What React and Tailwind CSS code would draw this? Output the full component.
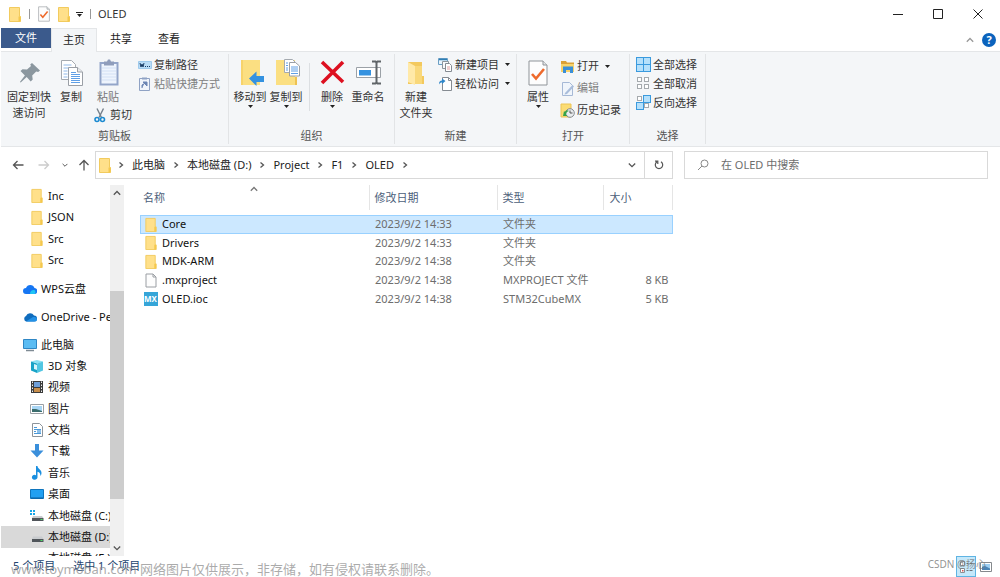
import React, { useState } from 'react';

const FolderIcon = ({ className = 'w-3 h-4' }) => (
  <svg viewBox="0 0 12 16" className={`shrink-0 ${className}`}>
    <path d="M.5 1.500h10v9h1v5H.5z" fill="#ffe08a" stroke="#f2cb5e" />
    <path d="M9.500 10.500h2v5h-2z" fill="#f5c84c" />
  </svg>
);

const CheckDocIcon = ({ className }) => (
  <svg viewBox="0 0 20 26" className={`shrink-0 ${className}`}>
    <path d="M1 1h14l4 4v20H1z" fill="#fdfdfd" stroke="#8f9499" strokeWidth="1" />
    <path d="M15 1v4h4" fill="#e4e6e8" stroke="#8f9499" strokeWidth="1" />
    <path d="M4 14l4 4.500 8-9.500" fill="none" stroke="#ee6a2c" strokeWidth="2.600" />
  </svg>
);

const Caret = ({ className = '' }) => (
  <svg viewBox="0 0 5 3" className={`w-[5px] h-[3px] shrink-0 ${className}`}>
    <path d="M0 0h5L2.500 3z" fill="#222" />
  </svg>
);

const Chevron = ({ dir = 'right', className = 'w-2 h-2', color = '#555' }) => {
  const paths = {
    right: 'M2.500 1.500L5.500 4l-3 2.500',
    down: 'M.8 2.500L4 5.700l3.200-3.200',
    up: 'M.8 5.700L4 2.500l3.200 3.200',
  };
  return (
    <svg viewBox="0 0 8 8" className={`shrink-0 ${className}`}>
      <path d={paths[dir]} fill="none" stroke={color} strokeWidth="1.300" />
    </svg>
  );
};

const PinIcon = () => (
  <svg viewBox="0 0 32 32" className="w-8 h-8">
    <path d="M19 6l8 7.500-1.800 1.500-2-.5-4 4 .5 4-2 2-4-4.500-6 5.500-.8-.6 5-6.400L7.500 14l2-1.800 4.500.3 4-3.500-.8-1.500z" fill="#8b979f" />
  </svg>
);

const CopyIcon = () => (
  <svg viewBox="0 0 32 32" className="w-8 h-8">
    <path d="M6.500 3.500h10l4 4v15h-14z" fill="#fff" stroke="#a5aab0" />
    <path d="M8.500 8h8M8.500 11h6M8.500 14h4M8.500 17h4M8.500 20h4" stroke="#8fb8e8" />
    <path d="M13.500 10.500h9l5 4.500v13.500h-14z" fill="#fff" stroke="#9a9fa6" />
    <path d="M22.500 10.500v4.500h5" fill="#e9ecef" stroke="#9a9fa6" />
    <path d="M16 15.500h5M16 17.500h9M16 19.500h9M16 21.500h9M16 23.500h9M16 25.500h9" stroke="#5f9fe6" />
  </svg>
);

const PasteIcon = () => (
  <svg viewBox="0 0 32 32" className="w-8 h-8">
    <path d="M8.500 6h17v21.500h-17z" fill="#eef4fd" stroke="#93a5c9" strokeWidth="2" />
    <path d="M12 4.500h3l1-2h2l1 2h3v4H12z" fill="#8f9dbb" />
    <path d="M10 11h14M10 14h14M10 17h14M10 20h14M10 23h14" stroke="#d3e0f4" />
  </svg>
);

const CutIcon = () => (
  <svg viewBox="0 0 12 15" className="w-3 h-[15px] shrink-0">
    <path d="M3 .5l4.500 9M9.500.5l-4.500 9" stroke="#75808a" strokeWidth="1.400" fill="none" />
    <circle cx="3" cy="11.500" r="2" fill="none" stroke="#1d8bd1" strokeWidth="1.600" />
    <circle cx="8.500" cy="11.500" r="2" fill="none" stroke="#1d8bd1" strokeWidth="1.600" />
  </svg>
);

const PathIcon = () => (
  <svg viewBox="0 0 14 14" className="w-3.5 h-3.5 shrink-0">
    <path d="M.5 3.500h13v7H.5z" fill="#b9dcf6" stroke="#9fcaec" />
    <path d="M2 5l1 4 1-3 1 3 1-4M7 8.500h1M9 8.500h1M11 8.500h1" stroke="#1b3d66" fill="none" />
  </svg>
);

const ShortcutIcon = () => (
  <svg viewBox="0 0 14 14" className="w-3.5 h-3.5 shrink-0">
    <path d="M1.500 1.500h10v12h-10z" fill="#f1f5fb" stroke="#8fa2c4" />
    <path d="M4 .5h5v2H4z" fill="#8fa2c4" />
    <path d="M4 11V8l2.500-1.500M5 5h4v4z" stroke="#6d86b4" fill="#6d86b4" />
  </svg>
);

const MoveToIcon = () => (
  <svg viewBox="0 0 32 32" className="w-8 h-8">
    <path d="M7 3h19v25H7z" fill="#fbdf82" />
    <path d="M7 3h2v25H7z" fill="#f7d36b" />
    <path d="M15 21.500l7.500-7v4.500H30v6h-7.500v4z" fill="#3492e0" />
  </svg>
);

const CopyToIcon = () => (
  <svg viewBox="0 0 32 32" className="w-8 h-8">
    <path d="M6 3h19v25H6z" fill="#fbdf82" />
    <path d="M25 20h2v8h-2z" fill="#eec252" />
    <path d="M14.500 2.500h8l3 3v10h-11z" fill="#fff" stroke="#a5aab0" />
    <path d="M19.500 5.500h6l4 3.500v10h-10z" fill="#fff" stroke="#9a9fa6" />
    <path d="M21 10h7M21 12h7M21 14h7M21 16.500h7M16 6h2M16 8.500h2M16 11h2M16 13h2" stroke="#5f9fe6" />
  </svg>
);

const DeleteIcon = () => (
  <svg viewBox="0 0 32 32" className="w-8 h-8">
    <path d="M6 5l21 20M27 5L6 26" stroke="#dd1020" strokeWidth="3.600" fill="none" />
  </svg>
);

const RenameIcon = () => (
  <svg viewBox="0 0 32 32" className="w-8 h-8">
    <path d="M4.500 10.500h24v10h-24z" fill="#fff" stroke="#9ba1a7" />
    <path d="M7 13h12v5.500H7z" fill="#3492e0" />
    <path d="M24.500 5v21M20 4.500h3.500l1 1 1-1H29M20 26.500h3.500l1-1 1 1H29" stroke="#5f6468" strokeWidth="2" fill="none" />
  </svg>
);

const NewFolderIcon = () => (
  <svg viewBox="0 0 32 32" className="w-8 h-8">
    <path d="M8 5h14v14h2v8H8z" fill="#f3c95e" />
    <path d="M8 5l7 4v19l-7-3z" fill="#ffe9a8" />
    <path d="M15 9h7v18h-7z" fill="#f9d87a" />
  </svg>
);

const NewItemIcon = () => (
  <svg viewBox="0 0 15 15" className="w-[15px] h-[15px] shrink-0">
    <path d="M.5 1.500h9v6h-9z" fill="#e7f3fc" stroke="#6b9fc4" />
    <path d="M1 2.500h8" stroke="#2f7fb5" strokeWidth="1.500" />
    <path d="M4.500 4.500h6v7h-6z" fill="#f7f9fb" stroke="#8d949b" />
    <path d="M7.500 6.500h4l2 2v6h-6z" fill="#fff" stroke="#858b92" />
    <path d="M9 10h3M9 12h3" stroke="#e3a0a0" />
  </svg>
);

const EasyAccessIcon = () => (
  <svg viewBox="0 0 15 15" className="w-[15px] h-[15px] shrink-0">
    <path d="M4.500 1.500h6l3 3v10h-9z" fill="#fff" stroke="#858b92" />
    <path d="M10.500 1.500v3h3" fill="none" stroke="#858b92" />
    <path d="M1 8.500c0-3 1-4 3-4V2.500L7.500 5 4 8V6.500C2.500 6.500 2 7 1 8.500z" fill="#2f86c9" />
  </svg>
);

const OpenIcon = () => (
  <svg viewBox="0 0 15 15" className="w-[15px] h-[15px] shrink-0">
    <path d="M1 2h5l1 1.500h7V9H1z" fill="#dba035" />
    <path d="M1 5h13v8H1z" fill="#f8d36a" />
    <path d="M3 7.500h10V14h-3v-3H6v3H3z" fill="#3a8fd8" />
  </svg>
);

const EditIcon = () => (
  <svg viewBox="0 0 15 15" className="w-[15px] h-[15px] shrink-0">
    <path d="M2.500 1.500h7l3 3v10h-10z" fill="#f0f5fb" stroke="#a6b9d6" />
    <path d="M5 12l7.500-8 1.500 1.500-7 7.500-2.500.5z" fill="#a9bddb" />
  </svg>
);

const HistoryIcon = () => (
  <svg viewBox="0 0 15 15" className="w-[15px] h-[15px] shrink-0">
    <path d="M1 1h10v13H1z" fill="#fbdc74" stroke="#ecc454" />
    <circle cx="10" cy="10" r="4.300" fill="#e9ecee" stroke="#858b91" />
    <path d="M10 7.500V10h2.500" stroke="#555" fill="none" />
    <path d="M4 8l-1 5 4.500 0-1.500-1.300c0-2 1-3.200 3-3.700C7 6.500 5.500 7.500 5 9z" fill="#35a34a" />
  </svg>
);

const SelectIcon = ({ cells }) => (
  <svg viewBox="0 0 15 15" className="w-[15px] h-[15px] shrink-0">
    {cells.map((on, i) => {
      const x = i % 2 ? 7.5 : 0.5;
      const y = i > 1 ? 7.5 : 0.5;
      return on ? (
        <rect key={i} x={x} y={y} width="7" height="7" fill="#b5e0fb" stroke="#3a9ade" />
      ) : (
        <rect key={i} x={x + 1} y={y + 1} width="4" height="4" fill="#fff" stroke="#a5aaae" />
      );
    })}
  </svg>
);

const BigButton = ({ icon, label, width, caret, disabled }) => (
  <button
    className={`flex flex-col items-center pt-0.5 leading-4 ${width} ${disabled ? 'text-[#777]' : ''}`}
  >
    {icon}
    <span className="whitespace-pre text-center">{label}</span>
    {caret && <Caret />}
  </button>
);

const SmallButton = ({ icon, label, caret, disabled, height = 'h-[19px]' }) => (
  <button className={`flex items-center gap-0.5 whitespace-nowrap ${height} ${disabled ? 'text-[#808080]' : ''}`}>
    {icon}
    <span>{label}</span>
    {caret && <Caret className="ml-1" />}
  </button>
);

const RibbonGroup = ({ caption, className, children }) => (
  <section className="flex flex-col border-r border-[#e2e4e6] shrink-0">
    <div className={`flex flex-1 items-start pt-px ${className}`}>{children}</div>
    <div className="text-center leading-4 text-[#555]">{caption}</div>
  </section>
);

const Ribbon = () => (
  <div className="flex h-24 border-y border-[#e4e6e8] bg-[#f4f6f8] pt-0.5 pb-0.5 shrink-0 overflow-hidden">
    <RibbonGroup caption="剪贴板" className="pl-1.5 pr-2">
      <BigButton icon={<PinIcon />} label={'固定到快\n速访问'} width="w-11" />
      <div className="w-[7px]" />
      <BigButton icon={<CopyIcon />} label="复制" width="w-[26px]" />
      <div className="flex w-12 flex-col items-center gap-0.5">
        <BigButton icon={<PasteIcon />} label="粘贴" width="w-8" disabled />
        <button className="flex items-center gap-1 self-end leading-4">
          <CutIcon />
          剪切
        </button>
      </div>
      <div className="ml-1.5 flex flex-col">
        <SmallButton icon={<PathIcon />} label="复制路径" />
        <SmallButton icon={<ShortcutIcon />} label="粘贴快捷方式" disabled />
      </div>
    </RibbonGroup>
    <RibbonGroup caption="组织" className="pl-[3px] pr-2">
      <BigButton icon={<MoveToIcon />} label="移动到" width="w-9" caret />
      <BigButton icon={<CopyToIcon />} label="复制到" width="w-9" caret />
      <div className="ml-[5px] mr-1 mt-2 h-12 border-r border-[#dcdfe2]" />
      <BigButton icon={<DeleteIcon />} label="删除" width="w-9" caret />
      <BigButton icon={<RenameIcon />} label="重命名" width="w-9" />
    </RibbonGroup>
    <RibbonGroup caption="新建" className="pl-[3px] pr-1.5">
      <BigButton icon={<NewFolderIcon />} label={'新建\n文件夹'} width="w-9" />
      <div className="ml-1 flex flex-col">
        <SmallButton icon={<NewItemIcon />} label="新建项目" caret />
        <SmallButton icon={<EasyAccessIcon />} label="轻松访问" caret />
      </div>
    </RibbonGroup>
    <RibbonGroup caption="打开" className="pl-[3px] pr-2">
      <BigButton
        icon={<span className="flex h-8 items-center"><CheckDocIcon className="w-5 h-[26px]" /></span>}
        label="属性"
        width="w-9"
        caret
      />
      <div className="ml-1 flex flex-col">
        <SmallButton icon={<OpenIcon />} label="打开" caret height="h-[22px]" />
        <SmallButton icon={<EditIcon />} label="编辑" disabled height="h-[22px]" />
        <SmallButton icon={<HistoryIcon />} label="历史记录" height="h-[22px]" />
      </div>
    </RibbonGroup>
    <RibbonGroup caption="选择" className="pl-1.5 pr-2">
      <div className="flex flex-col">
        <SmallButton icon={<SelectIcon cells={[1, 1, 1, 1]} />} label="全部选择" />
        <SmallButton icon={<SelectIcon cells={[0, 0, 0, 0]} />} label="全部取消" />
        <SmallButton icon={<SelectIcon cells={[0, 1, 1, 0]} />} label="反向选择" />
      </div>
    </RibbonGroup>
  </div>
);

const TitleBar = () => (
  <header className="flex h-7 items-center shrink-0">
    <FolderIcon className="ml-2 w-3 h-4" />
    <div className="mx-2 h-2.5 w-px bg-[#999]" />
    <CheckDocIcon className="w-3 h-4" />
    <FolderIcon className="ml-2 w-3 h-4" />
    <button aria-label="自定义快速访问工具栏" className="ml-1.5 flex flex-col items-center gap-px">
      <span className="h-px w-[7px] bg-[#222]" />
      <Caret />
    </button>
    <div className="mx-[7px] h-2.5 w-px bg-[#999]" />
    <h1>OLED</h1>
    <div className="ml-auto flex pr-0.5">
      <button aria-label="最小化" className="flex h-7 w-10 items-center justify-center">
        <svg viewBox="0 0 10 10" className="w-2.5 h-2.5"><path d="M0 5.500h10" stroke="#222" /></svg>
      </button>
      <button aria-label="最大化" className="flex h-7 w-10 items-center justify-center">
        <svg viewBox="0 0 10 10" className="w-2.5 h-2.5"><path d="M.5.500h9v9h-9z" stroke="#222" fill="none" /></svg>
      </button>
      <button aria-label="关闭" className="flex h-7 w-10 items-center justify-center">
        <svg viewBox="0 0 10 10" className="w-2.5 h-2.5"><path d="M.5.500l9 9M9.500.500l-9 9" stroke="#222" /></svg>
      </button>
    </div>
  </header>
);

const TabBar = () => (
  <div className="flex h-[23px] shrink-0">
    <button className="h-5 w-[50px] bg-[#3b5a8c] text-white">文件</button>
    <button className="-mb-px w-[46px] border border-b-0 border-[#e4e6e8] bg-[#f4f6f8] pb-0.5 text-[#222] z-10">主页</button>
    <button className="w-12 pb-0.5 text-[#222]">共享</button>
    <button className="w-12 pb-0.5 text-[#222]">查看</button>
    <div className="ml-auto flex items-center gap-2 pr-1">
      <button aria-label="最小化功能区" className="flex"><Chevron dir="up" color="#999" /></button>
      <button aria-label="帮助" className="flex h-3.5 w-3.5 items-center justify-center rounded-full bg-[#0b63bd] font-bold text-white">?</button>
    </div>
  </div>
);

const crumbs = ['此电脑', '本地磁盘 (D:)', 'Project', 'F1', 'OLED'];

const AddressBar = () => (
  <div className="flex h-9 items-center pl-[11px] pr-3 shrink-0">
    <div className="flex w-[83px] items-center gap-3.5">
      <button aria-label="返回" className="flex">
        <svg viewBox="0 0 12 12" className="w-3 h-3"><path d="M11.500 6H1.500M5.500 2L1.500 6l4 4" fill="none" stroke="#555" strokeWidth="1.300" /></svg>
      </button>
      <button aria-label="前进" className="flex">
        <svg viewBox="0 0 12 12" className="w-3 h-3"><path d="M.5 6h10M6.500 2l4 4-4 4" fill="none" stroke="#ccc" strokeWidth="1.300" /></svg>
      </button>
      <button aria-label="最近浏览的位置" className="-ml-0.5 flex"><Chevron dir="down" className="w-1.5 h-1.5" /></button>
      <button aria-label="向上" className="-ml-1 flex">
        <svg viewBox="0 0 12 12" className="w-3 h-3"><path d="M6 11.500V1.500M1.500 6L6 1.500 10.500 6" fill="none" stroke="#555" strokeWidth="1.300" /></svg>
      </button>
    </div>
    <div className="flex h-7 flex-1 items-center border border-[#d9d9d9]">
      <FolderIcon className="ml-[3px] w-3 h-4" />
      <nav className="ml-1.5 flex items-center">
        <Chevron />
        {crumbs.map((crumb) => (
          <React.Fragment key={crumb}>
            <a href="#" className="mx-[7px] text-[#222]">{crumb}</a>
            <Chevron />
          </React.Fragment>
        ))}
      </nav>
      <button aria-label="以前的位置" className="ml-auto mr-2 flex"><Chevron dir="down" /></button>
      <button aria-label="刷新" className="flex h-full w-7 items-center justify-center border-l border-[#d9d9d9]">
        <svg viewBox="0 0 10 10" className="w-2.5 h-2.5">
          <path d="M7 1.800A3.700 3.700 0 1 1 3 1.800M1 1.200h2.800V4" fill="none" stroke="#555" strokeWidth="1.200" />
        </svg>
      </button>
    </div>
    <label className="ml-[11px] flex h-7 w-[304px] items-center border border-[#d9d9d9] pl-3">
      <svg viewBox="0 0 12 12" className="w-3 h-3">
        <circle cx="7.500" cy="4.500" r="3.500" fill="none" stroke="#888" />
        <path d="M5 7L1 11" stroke="#888" />
      </svg>
      <input
        type="search"
        aria-label="搜索"
        placeholder="在 OLED 中搜索"
        className="ml-3 flex-1 outline-none placeholder:text-[#6d6d6d]"
      />
    </label>
  </div>
);

/* navigation pane icons */
const treeIcons = {
  wps: (
    <>
      <path d="M3 12a3 3 0 0 1 0-6 4.500 4.500 0 0 1 8.500 0A3 3 0 0 1 11 12z" fill="#1676f3" />
      <path d="M7 12c0-3 2-4.500 4.500-4a2.500 2.500 0 0 1 0 4z" fill="#20c4f4" />
    </>
  ),
  onedrive: (
    <>
      <path d="M3 11.500a3 3 0 0 1 0-5.500 4.500 4.500 0 0 1 8-.5 3 3 0 0 1 0 6z" fill="#0f6cbd" />
      <path d="M3 11.500l7-4.500c3-.5 4 1 4 2.500s-1 2-2.500 2z" fill="#2391e6" />
    </>
  ),
  pc: (
    <>
      <path d="M.5 1.500h13v9H.5z" fill="#5bbcf3" stroke="#2f86c4" />
      <path d="M3 12.500h8" stroke="#7f8b94" strokeWidth="1.500" />
    </>
  ),
  cube: (
    <>
      <path d="M1 2.500L7 1l6 1.500-5 2z" fill="#8be0f2" />
      <path d="M1 2.500l6 2V14l-6-2.500z" fill="#18a3c7" />
      <path d="M13 2.500l-6 2V14l6-2.500z" fill="#52c6e2" />
      <path d="M4 5l3 1v5l-3-1z" fill="#d9f5fb" />
    </>
  ),
  video: (
    <>
      <path d="M1 1h12v12H1z" fill="#3b3b3b" />
      <path d="M4 2h6v5H4z" fill="#6f9fd8" />
      <path d="M4 8h6v4H4z" fill="#c78e4b" />
      <path d="M2.500 1.500v12M11.500 1.500v12" stroke="#eee" strokeDasharray="1.500 1.500" />
    </>
  ),
  picture: (
    <>
      <path d="M.5 2.500h13v9H.5z" fill="#fff" stroke="#9aa0a5" />
      <path d="M2 4h10v6H2z" fill="#a9d6f5" />
      <path d="M2 7l4 0 6 2v1H2z" fill="#3a6d6d" />
    </>
  ),
  doc: (
    <>
      <path d="M2.500.500h7l3 3v10h-10z" fill="#fff" stroke="#8d949b" />
      <path d="M4 4.500h3M4 6.500h7M4 8.500h2M4 10.500h7" stroke="#4a98d8" />
      <path d="M7 7h4v3H7z" fill="#8cc0ea" />
    </>
  ),
  download: <path d="M5 0h4v6.500h4.500L7 13.500.5 6.500H5z" fill="#3a8fdb" />,
  music: (
    <path d="M6 0h1.500c0 3 4 3.500 4 7 0 1.500-.7 2.500-1.300 3 .4-2-.2-3.500-2.700-4.300v5.500A2.800 2.400 0 1 1 6 9.200z" fill="#1a8fe0" />
  ),
  desktop: (
    <>
      <path d="M.5 2.500h13v9H.5z" fill="#22a0f2" stroke="#0f75bd" />
      <path d="M1 11h12" stroke="#0d5d9c" />
    </>
  ),
  windisk: (
    <>
      <path d="M0 1h2v2H0zM3 1h2v2H3zM0 4h2v2H0zM3 4h2v2H3z" fill="#17a6e8" />
      <path d="M3 7h9l1.500 2H2z" fill="#c9cccf" />
      <path d="M2 9h11.500v3H2z" fill="#50555a" />
      <path d="M10.500 10.500h2" stroke="#4fdf6a" />
    </>
  ),
  disk: (
    <>
      <path d="M3 6.500h9L13.500 9H2z" fill="#c9cccf" />
      <path d="M2 9h11.500v3H2z" fill="#50555a" />
      <path d="M10.500 10.500h2" stroke="#4fdf6a" />
    </>
  ),
};

const TreeRow = ({ icon, label, root, selected }) => (
  <a
    href="#"
    className={`flex items-center gap-1 whitespace-nowrap ${root ? 'pl-[21px]' : 'pl-7'} ${selected ? 'bg-[#d9d9d9]' : ''}`}
  >
    <span className="flex w-[15px] shrink-0 justify-center">
      {icon === 'folder' ? (
        <FolderIcon className="w-3 h-[15px]" />
      ) : (
        <svg viewBox="0 0 14 14" className="w-3.5 h-3.5">{treeIcons[icon]}</svg>
      )}
    </span>
    {label}
  </a>
);

const folders = ['Inc', 'JSON', 'Src', 'Src'];

const thisPc = [
  { icon: 'cube', label: '3D 对象' },
  { icon: 'video', label: '视频' },
  { icon: 'picture', label: '图片' },
  { icon: 'doc', label: '文档' },
  { icon: 'download', label: '下载' },
  { icon: 'music', label: '音乐' },
  { icon: 'desktop', label: '桌面' },
  { icon: 'windisk', label: '本地磁盘 (C:)' },
  { icon: 'disk', label: '本地磁盘 (D:)', selected: true },
  { icon: 'disk', label: '本地磁盘 (E:)' },
];

const Sidebar = () => (
  <aside className="flex w-[123px] shrink-0">
    <nav className="flex min-w-0 flex-1 flex-col gap-[7px] overflow-hidden pt-0.5 text-[#111]">
      <div className="grid h-[86px] shrink-0 auto-rows-fr">
        {folders.map((name, i) => (
          <TreeRow key={i} icon="folder" label={name} />
        ))}
      </div>
      <div className="grid h-[21px] shrink-0"><TreeRow icon="wps" label="WPS云盘" root /></div>
      <div className="grid h-[21px] shrink-0"><TreeRow icon="onedrive" label="OneDrive - Personal" root /></div>
      <div className="grid h-[235px] shrink-0 auto-rows-fr">
        <TreeRow icon="pc" label="此电脑" root />
        {thisPc.map((item) => (
          <TreeRow key={item.label} {...item} />
        ))}
      </div>
    </nav>
    <div className="mt-0.5 flex w-3.5 flex-col bg-[#f0f0f0]">
      <button aria-label="向上滚动" className="flex h-4 items-center justify-center"><Chevron dir="up" /></button>
      <div className="flex-[90]" />
      <div className="flex-[209] bg-[#cdcdcd]" />
      <div className="flex-[41]" />
      <button aria-label="向下滚动" className="flex h-4 items-center justify-center"><Chevron dir="down" /></button>
    </div>
  </aside>
);

const files = [
  { name: 'Core', date: '2023/9/2 14:33', type: '文件夹', size: '', icon: 'folder' },
  { name: 'Drivers', date: '2023/9/2 14:33', type: '文件夹', size: '', icon: 'folder' },
  { name: 'MDK-ARM', date: '2023/9/2 14:38', type: '文件夹', size: '', icon: 'folder' },
  { name: '.mxproject', date: '2023/9/2 14:38', type: 'MXPROJECT 文件', size: '8 KB', icon: 'file' },
  { name: 'OLED.ioc', date: '2023/9/2 14:38', type: 'STM32CubeMX', size: '5 KB', icon: 'mx' },
];

const FileIcon = ({ type }) => {
  if (type === 'folder') return <FolderIcon className="w-3 h-[15px]" />;
  if (type === 'mx') {
    return (
      <span className="flex h-3.5 w-3.5 items-center justify-center bg-[#35a5d8] text-[8px] font-bold text-white">MX</span>
    );
  }
  return (
    <svg viewBox="0 0 12 15" className="w-3 h-[15px]">
      <path d="M1 1h7l3 3v10H1z" fill="#fdfdfd" stroke="#9a9ea3" />
      <path d="M8 1v3h3" fill="none" stroke="#9a9ea3" />
    </svg>
  );
};

const FileTable = () => {
  const [selected, setSelected] = useState('Core');

  return (
    <main className="min-w-0 flex-1 pl-4 pt-0.5">
      <table className="h-[123px] w-[533px] table-fixed border-collapse">
        <thead>
          <tr className="h-[25px] text-left text-[#4c607a]">
            <th className="relative w-[229px] border-r border-[#e5e5e5] pl-[3px] font-normal">
              名称
              <Chevron dir="up" className="absolute top-0 left-[110px] w-2 h-2" color="#777" />
            </th>
            <th className="w-32 border-r border-[#e5e5e5] pl-[5px] font-normal">修改日期</th>
            <th className="w-[106px] border-r border-[#e5e5e5] pl-[5px] font-normal">类型</th>
            <th className="border-r border-[#e5e5e5] pl-1.5 font-normal">大小</th>
          </tr>
          <tr className="h-[5px]"><td colSpan={4} /></tr>
        </thead>
        <tbody className="text-[#6d6d6d] leading-[18px]">
          {files.map((file) => (
            <tr
              key={file.name}
              onClick={() => setSelected(file.name)}
              className={selected === file.name ? 'bg-[#cce8ff] outline outline-[#99d1ff] -outline-offset-1' : ''}
            >
              <td className="p-0">
                <div className="flex items-center gap-1 pl-[3px] text-[#111]">
                  <span className="flex w-[15px] justify-center"><FileIcon type={file.icon} /></span>
                  {file.name}
                </div>
              </td>
              <td className="p-0 pl-1.5">{file.date}</td>
              <td className="p-0 pl-1.5">{file.type}</td>
              <td className="p-0 pr-1 text-right">{file.size}</td>
            </tr>
          ))}
        </tbody>
      </table>
    </main>
  );
};

const StatusBar = () => (
  <footer className="relative flex h-[21px] items-center pl-3 pr-2 text-[#23446e] shrink-0">
    <span className="pb-0.5">5 个项目</span>
    <span className="ml-[18px] pb-0.5">选中 1 个项目</span>
    <div className="ml-auto flex h-full items-center gap-1">
      <button aria-label="详细信息" className="flex h-full w-5 items-center justify-center border border-[#5fb4e3] bg-[#c5e8fa]">
        <svg viewBox="0 0 14 14" className="w-3.5 h-3.5">
          <path d="M1.500 1.500h4v4h-4zM1.500 8.500h4v4h-4z" fill="#fff" stroke="#8a8f94" />
          <path d="M3 10h1.500v1.500H3z" fill="#d9534f" />
          <path d="M7.500 3.500h2M10.500 3.500h3M7.500 10.500h2M10.500 10.500h3" stroke="#6b7176" />
        </svg>
      </button>
      <button aria-label="大图标" className="flex">
        <svg viewBox="0 0 12 10" className="w-3 h-2.5">
          <path d="M.5.500h11v9H.5z" fill="#fff" stroke="#85898d" />
          <path d="M2 2h8v6H2z" fill="#9dcff2" />
          <path d="M2 5l3-1 5 2.500V8H2z" fill="#4a84b5" />
        </svg>
      </button>
    </div>
    {/* watermarks over the bar */}
    <span className="absolute left-2.5 top-1 whitespace-nowrap text-[13px] leading-[18px] text-[#8f8f8f]/75">
      www.toymoban.com 网络图片仅供展示，非存储，如有侵权请联系删除。
    </span>
    <span className="absolute right-3.5 top-0 whitespace-nowrap text-[10px] leading-4 text-[#777]/80">CSDN @扬心</span>
  </footer>
);

const App = () => {
  return (
    <div className="flex h-screen flex-col overflow-hidden bg-white pl-px font-['Noto_Sans','Noto_Sans_CJK_SC',sans-serif] text-[11px] leading-4 text-[#333]">
      <TitleBar />
      <TabBar />
      <Ribbon />
      <AddressBar />
      <div className="flex min-h-0 flex-1 overflow-hidden">
        <Sidebar />
        <FileTable />
      </div>
      <StatusBar />
    </div>
  );
};

export default App;
